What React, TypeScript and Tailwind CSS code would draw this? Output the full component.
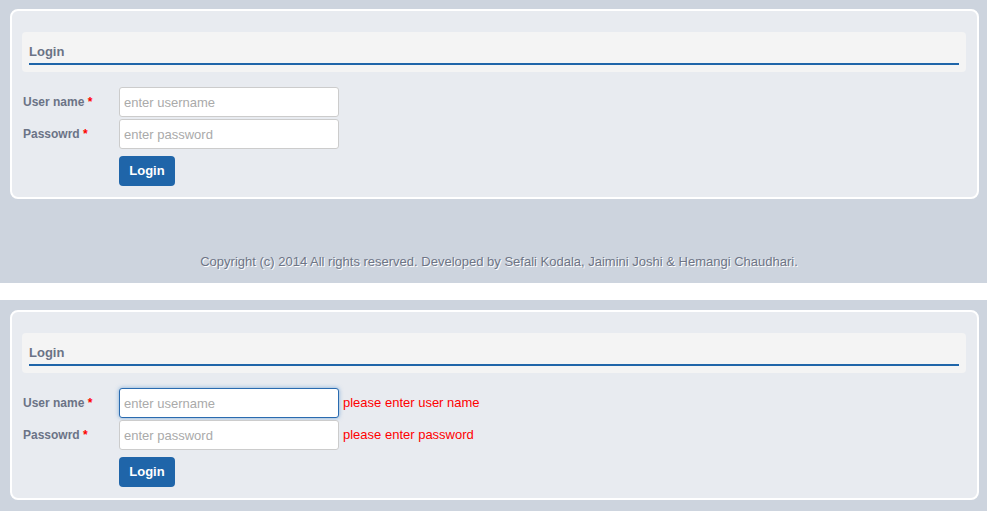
import React from "react";

const font = { fontFamily: '"Liberation Sans", Arial, sans-serif' };

function Field({
  label,
  placeholder,
  error,
  focused,
}: {
  label: string;
  placeholder: string;
  error?: string;
  focused?: boolean;
}) {
  return (
    <div className="flex items-center h-[32px]">
      <div className="w-[97px] pl-[1px] text-[12px] font-bold text-[#6b7386]">
        {label} <span className="text-[#ff0000]">*</span>
      </div>
      <input
        readOnly
        placeholder={placeholder}
        className={
          focused
            ? "w-[220px] h-[30px] rounded-[3px] border border-[#2a6bb0] bg-white px-[4px] text-[13px] text-[#555] placeholder:text-[#aaaaaa] outline-none shadow-[0_0_4px_rgba(60,130,200,0.6)]"
            : "w-[220px] h-[30px] rounded-[3px] border border-[#cccccc] bg-white px-[4px] text-[13px] text-[#555] placeholder:text-[#aaaaaa] outline-none"
        }
        style={font}
      />
      {error && <span className="ml-[4px] text-[13px] text-[#ff0000]">{error}</span>}
    </div>
  );
}

function Panel({ errors, focused }: { errors?: boolean; focused?: boolean }) {
  return (
    <div className="ml-[10px] w-[969px] rounded-[8px] border-2 border-white bg-[#e8ebf0] pl-[10px] pr-[11px] pt-[21px] pb-[11px]">
      <div className="h-[40px] rounded-[4px] bg-[#f4f4f4] px-[7px] pt-[11px]">
        <div className="border-b-2 border-[#1f65a9] pb-[3px] text-[13px] font-bold leading-[17px] text-[#6b7386]">
          Login
        </div>
      </div>
      <div className="mt-[14px] flex flex-col">
        <Field
          label="User name"
          placeholder="enter username"
          error={errors ? "please enter user name" : undefined}
          focused={focused}
        />
        <Field
          label="Passowrd"
          placeholder="enter password"
          error={errors ? "please enter password" : undefined}
        />
        <div className="mt-[6px] pl-[97px]">
          <button className="h-[30px] w-[56px] rounded-[4px] bg-[#1f65a9] text-[13px] font-bold text-white">
            Login
          </button>
        </div>
      </div>
    </div>
  );
}

export default function App() {
  return (
    <div className="w-[987px] h-[511px] overflow-hidden bg-white" style={font}>
      <div className="h-[283px] bg-[#cdd4de] pt-[9px]">
        <Panel />
        <div className="mt-[53px] pl-[11px] text-center text-[13px] text-[#6e7586] [text-shadow:1px_1px_0_#ffffff]">
          Copyright (c) 2014 All rights reserved. Developed by Sefali Kodala, Jaimini Joshi &amp; Hemangi Chaudhari.
        </div>
      </div>
      <div className="h-[17px] bg-white" />
      <div className="h-[211px] bg-[#cdd4de] pt-[10px]">
        <Panel errors focused />
      </div>
    </div>
  );
}
